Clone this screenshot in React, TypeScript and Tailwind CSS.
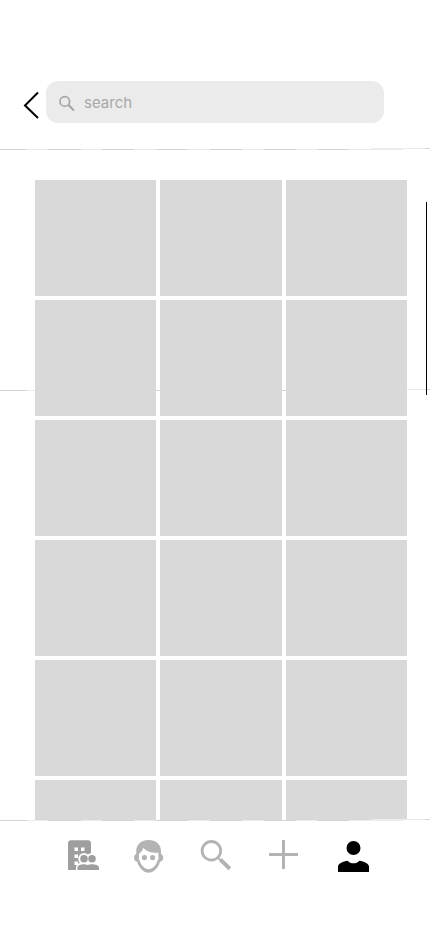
import React from "react";

const TILE_COUNT = 18;

function Rule({ className = "" }: { className?: string }) {
  return (
    <svg
      aria-hidden="true"
      className={`block h-0.5 w-full ${className}`}
      viewBox="0 0 430 2"
      preserveAspectRatio="none"
      shapeRendering="crispEdges"
    >
      <path d="M0 1.5H403M371 .5H430" stroke="#ebebeb" />
      <path
        d="M0 1.5H27M48 1.5H81M102 1.5H134M156 1.5H188M210 1.5H242M264 1.5H296M317 1.5H349M425 .5H430"
        stroke="#d4d4d4"
      />
    </svg>
  );
}

function BackIcon() {
  return (
    <svg aria-hidden="true" className="h-7 w-4" viewBox="0 0 16 28" fill="none">
      <path d="M15 1.5 2 14.5 15 27" stroke="#000" strokeWidth="2" />
    </svg>
  );
}

function SearchIcon({ className }: { className: string }) {
  return (
    <svg aria-hidden="true" className={className} viewBox="0 0 36 36" fill="none" stroke="currentColor">
      <circle cx="11.4" cy="13.8" r="9.3" strokeWidth="2.8" />
      <path d="m17.8 20.6 3 3" strokeWidth="2" />
      <path d="m20.2 22.4 9.6 9.4" strokeWidth="4" />
    </svg>
  );
}

function FieldSearchIcon() {
  return (
    <svg
      aria-hidden="true"
      className="mt-px size-[18px] text-[#a3a3a3]"
      viewBox="0 0 18 18"
      fill="none"
      stroke="currentColor"
    >
      <circle cx="6.8" cy="6.4" r="4.8" strokeWidth="1.6" />
      <path d="m10.3 9.8 5.7 5.8" strokeWidth="2" />
    </svg>
  );
}

function CommunityIcon() {
  return (
    <svg aria-hidden="true" className="size-9" viewBox="0 0 36 36" fill="#9e9e9e">
      <path d="M7 3.3H24Q27 3.3 27 6.3V33H4V6.3Q4 3.3 7 3.3Z" />
      <path
        d="M10.5 10.5H14V14H10.5ZM17 10.5H20.5V14H17ZM10.5 17.6H14V21H10.5ZM10.5 24.5H14V28H10.5Z"
        fill="#fff"
      />
      <g fill="#fff">
        <circle cx="20" cy="21.8" r="5.8" />
        <circle cx="27.8" cy="21.8" r="5.8" />
        <path d="M12 33V30.5C12 27 16 25.3 19.8 25.3H27.8C32 25.3 36 27 36 30.5V33Z" />
      </g>
      <circle cx="20" cy="21.8" r="3.8" />
      <circle cx="28" cy="21.8" r="3.8" />
      <path d="M13.5 33V30.5C13.5 28.2 17 27.2 19.8 27.2Q21.8 27.2 23.8 28Q25.6 27.2 27.8 27.2C31 27.2 35 28.2 35 30.5V33Z" />
    </svg>
  );
}

function FaceIcon() {
  return (
    <svg aria-hidden="true" className="size-9" viewBox="0 0 36 36" fill="#b3b3b3">
      <path d="M16.6 3C23.8 3 29 7.5 29 14V17C30.5 17.6 31.2 19 31.2 20.7C31.2 22.8 30 24.4 28 24.8C26 31.5 21.3 35.8 16.6 35.8C11.9 35.8 7.2 31.5 5.2 24.8C3.2 24.4 2 22.8 2 20.7C2 19 2.7 17.6 4.2 17V14C4.2 7.5 9.4 3 16.6 3Z" />
      <path
        d="M11.2 10.8C10.7 13.6 8.6 15.7 7 17V20.7C6.4 21.6 6.4 22.3 7.4 22.8C8.8 28.5 13 32.2 16.6 32.2S24.4 28.5 25.8 22.8C26.8 22.3 26.8 21.6 26.4 20.7V15.7C19.5 16.2 14.4 14.8 11.2 10.8Z"
        fill="#fff"
      />
      <circle cx="12.4" cy="20.6" r="2.6" />
      <circle cx="20.6" cy="20.6" r="2.6" />
    </svg>
  );
}

function PlusIcon() {
  return (
    <svg aria-hidden="true" className="size-9" viewBox="0 0 36 36">
      <path d="M1 17.5H30M15.5 3V32" stroke="#b3b3b3" strokeWidth="3" />
    </svg>
  );
}

function ProfileIcon() {
  return (
    <svg aria-hidden="true" className="size-9" viewBox="0 0 36 36" fill="#000">
      <circle cx="17.5" cy="11" r="7" />
      <path d="M2 35V29.5C2 26.5 7.5 24.2 11.5 23.7C14.5 27.1 20.5 27.1 23.5 23.7C27.5 24.2 33 26.5 33 29.5V35Z" />
    </svg>
  );
}

const tabs = [
  { label: "Community", icon: <CommunityIcon /> },
  { label: "People", icon: <FaceIcon /> },
  { label: "Search", icon: <SearchIcon className="size-9 text-[#b3b3b3]" /> },
  { label: "Add", icon: <PlusIcon /> },
  { label: "Profile", icon: <ProfileIcon /> },
];

export default function App() {
  return (
    <div className="flex h-screen flex-col overflow-hidden bg-white font-['Inter',sans-serif]">
      <header className="flex items-center gap-[7px] pt-[81px] pr-[46px] pb-[25px] pl-[23px]">
        <button type="button" aria-label="Back" className="mt-1.5">
          <BackIcon />
        </button>
        <label className="flex h-[42px] flex-1 items-center gap-2 rounded-xl bg-[#ebebeb] pt-0.5 pl-3">
          <FieldSearchIcon />
          <input
            type="text"
            aria-label="Search"
            placeholder="search"
            className="min-w-0 flex-1 bg-transparent text-[15px] leading-5 outline-none placeholder:text-[#a8a8a8]"
          />
        </label>
      </header>
      <Rule className="shrink-0" />

      <main className="relative min-h-0 flex-1 overflow-hidden pt-[30px] pr-[23px] pl-[35px]">
        <Rule className="absolute top-[239px] left-0" />
        <div className="relative grid grid-cols-3 gap-1">
          {Array.from({ length: TILE_COUNT }, (_, i) => (
            <div key={i} className="h-[116px] bg-[#d9d9d9]" />
          ))}
        </div>
        <div className="absolute top-[52px] right-[3px] h-[193px] w-px bg-black" />
      </main>

      <nav className="relative h-28 shrink-0 bg-white">
        <Rule className="absolute -top-px left-0" />
        <div className="flex justify-between pt-[17px] pr-[58px] pl-16">
          {tabs.map((tab) => (
            <button key={tab.label} type="button" aria-label={tab.label}>
              {tab.icon}
            </button>
          ))}
        </div>
      </nav>
    </div>
  );
}
